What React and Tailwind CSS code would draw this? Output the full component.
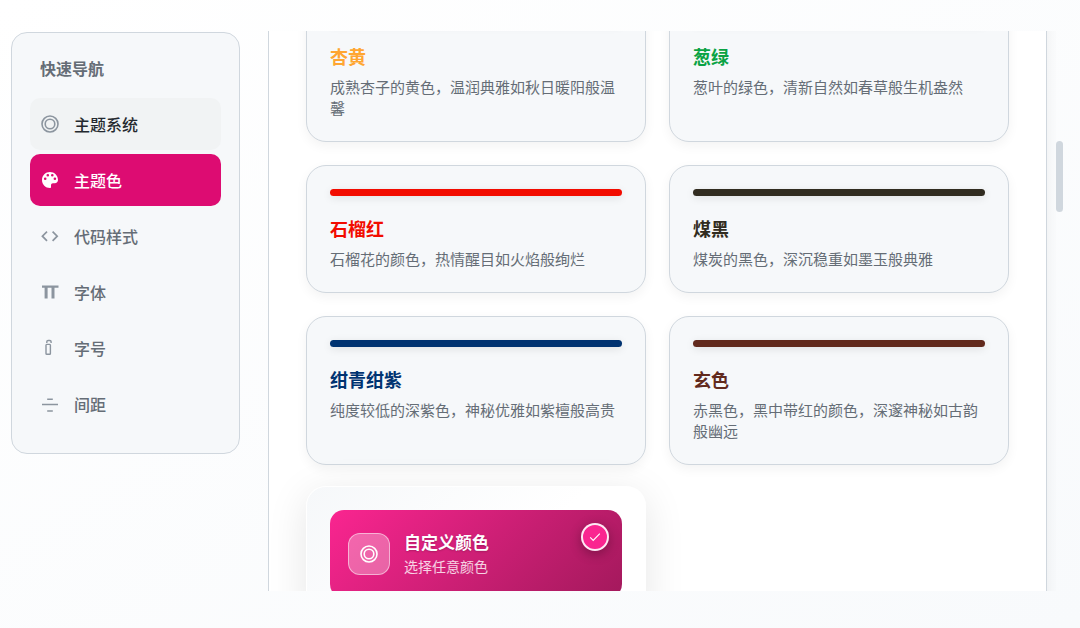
import { useState } from 'react'
import clsx from 'clsx'

const RingIcon = ({ className }) => (
  <svg viewBox="0 0 20 20" fill="none" stroke="currentColor" strokeWidth="1.6" className={className} aria-hidden="true">
    <circle cx="10" cy="10" r="8" />
    <circle cx="10" cy="10" r="4.8" />
  </svg>
)

const PaletteIcon = ({ className }) => (
  <svg viewBox="0 0 20 20" fill="currentColor" className={className} aria-hidden="true">
    <path
      fillRule="evenodd"
      d="M10 2C5.5 2 2 5.5 2 10s3.600 8 8 8c.6 0 1-.5 1-1.100v-1.700c0-1.100.8-1.900 1.900-1.900h1.900c1.800 0 3.200-1.500 3.200-3.300C18 5.500 14.400 2 10 2ZM5.200 10a1.300 1.300 0 1 1 0-2.600 1.300 1.300 0 0 1 0 2.600Zm2.600-3.500a1.300 1.300 0 1 1 0-2.600 1.300 1.300 0 0 1 0 2.600Zm4.500 0a1.300 1.300 0 1 1 0-2.600 1.300 1.300 0 0 1 0 2.600Zm2.600 3.500a1.300 1.300 0 1 1 0-2.600 1.300 1.300 0 0 1 0 2.600Z"
    />
  </svg>
)

const CodeIcon = ({ className }) => (
  <svg viewBox="0 0 20 20" fill="none" stroke="currentColor" strokeWidth="1.7" className={className} aria-hidden="true">
    <path d="M7 5.600 2.400 10.200 7 14.800M12.600 5.600l4.600 4.600-4.600 4.600" />
  </svg>
)

const FontIcon = ({ className }) => (
  <svg viewBox="0 0 20 20" fill="currentColor" className={className} aria-hidden="true">
    <path d="M2 3.400h16.500v2.400h-4v10.700h-3V5.800H7.600v10.700h-3V5.800H2z" />
  </svg>
)

const SizeIcon = ({ className }) => (
  <svg viewBox="0 0 20 20" fill="none" stroke="currentColor" strokeWidth="1.4" className={className} aria-hidden="true">
    <path d="M6.800 5V3.800c0-.8.5-1.300 1.300-1.300h1.700c.8 0 1.300.5 1.300 1.300V5" />
    <rect x="6" y="6.400" width="4.400" height="9.800" rx="0.800" />
  </svg>
)

const SpacingIcon = ({ className }) => (
  <svg viewBox="0 0 20 20" fill="none" stroke="currentColor" strokeWidth="1.5" className={className} aria-hidden="true">
    <path d="M2 10.500h16M7.200 5.200h5.600M7.200 17h5.600" />
  </svg>
)

const navItems = [
  { id: 'theme', label: '主题系统', icon: RingIcon },
  { id: 'color', label: '主题色', icon: PaletteIcon },
  { id: 'code', label: '代码样式', icon: CodeIcon },
  { id: 'font', label: '字体', icon: FontIcon },
  { id: 'size', label: '字号', icon: SizeIcon },
  { id: 'spacing', label: '间距', icon: SpacingIcon },
]

const colors = [
  { name: '杏黄', desc: '成熟杏子的黄色，温润典雅如秋日暖阳般温馨', bar: 'bg-[#ffa631]', text: 'text-[#ffa631]' },
  { name: '葱绿', desc: '葱叶的绿色，清新自然如春草般生机盎然', bar: 'bg-[#0aa344]', text: 'text-[#0aa344]' },
  { name: '石榴红', desc: '石榴花的颜色，热情醒目如火焰般绚烂', bar: 'bg-[#f20c00]', text: 'text-[#f20c00]' },
  { name: '煤黑', desc: '煤炭的黑色，深沉稳重如墨玉般典雅', bar: 'bg-[#312c20]', text: 'text-[#312c20]' },
  { name: '绀青绀紫', desc: '纯度较低的深紫色，神秘优雅如紫檀般高贵', bar: 'bg-[#003371]', text: 'text-[#003371]' },
  { name: '玄色', desc: '赤黑色，黑中带红的颜色，深邃神秘如古韵般幽远', bar: 'bg-[#622a1d]', text: 'text-[#622a1d]' },
]

function Sidebar({ active, onSelect }) {
  return (
    <nav className="mt-px w-[229px] shrink-0 self-start rounded-2xl border border-[#d0d7de] bg-[#f6f8fa] px-[18px] py-[23px]">
      <h2 className="mb-[18px] px-2.5 text-base leading-6 font-semibold text-[#656d76]">快速导航</h2>
      <div className="flex flex-col gap-1">
        {navItems.map(({ id, label, icon: Icon }) => (
          <button
            key={id}
            type="button"
            onClick={() => onSelect(id)}
            className={clsx(
              'flex h-13 items-center gap-3.5 rounded-[10px] px-2.5 text-base font-medium',
              active === id && 'bg-[#dd0c72] text-white',
              active !== id && id === 'theme' && 'bg-[#f1f3f4] text-[#24292f]',
              active !== id && id !== 'theme' && 'text-[#656d76]'
            )}
          >
            <Icon className={clsx('size-5', active === id ? 'text-white' : 'text-[#8c959f]')} />
            <span>{label}</span>
          </button>
        ))}
      </div>
    </nav>
  )
}

function ColorCard({ color }) {
  return (
    <button
      type="button"
      className="flex flex-col rounded-[20px] border border-[#d0d7de] bg-[#f6f8fa] p-[23px] text-left shadow-[0_4px_12px_rgba(0,0,0,0.05)]"
    >
      <span className={clsx('mb-5 h-[7px] w-full rounded-full shadow-[0_2px_8px_rgba(0,0,0,0.1)]', color.bar)} />
      <span className={clsx('mb-2 text-lg leading-6 font-semibold', color.text)}>{color.name}</span>
      <span className="text-[15px] leading-[21px] text-[#656d76]">{color.desc}</span>
    </button>
  )
}

function CustomColorCard() {
  return (
    <div className="-translate-y-0.5 rounded-[20px] border border-white bg-linear-135 from-[#f6f8fa] to-white to-60% p-[23px] shadow-[0_8px_40px_rgba(0,0,0,0.1)]">
      <button
        type="button"
        className="flex w-full items-start justify-between rounded-[14px] bg-linear-135 from-[#fa2590] to-[#a3195c] p-[13px] text-left text-white"
      >
        <span className="flex items-center gap-3.5 py-[7px] pl-[5px]">
          <span className="flex size-[42px] items-center justify-center rounded-xl border border-white/50 bg-white/30">
            <RingIcon className="size-5" />
          </span>
          <span className="flex flex-col">
            <span className="text-[17px] leading-6 font-semibold [text-shadow:0_1px_2px_rgba(0,0,0,0.2)]">自定义颜色</span>
            <span className="text-sm leading-6 text-white/80">选择任意颜色</span>
          </span>
        </span>
        <span className="flex size-7 items-center justify-center rounded-full border-2 border-white/90 bg-[#fa2590] shadow-[0_3px_12px_rgba(0,0,0,0.3)]">
          <svg viewBox="0 0 12 12" fill="none" stroke="currentColor" strokeWidth="1.1" className="size-3" aria-hidden="true">
            <path d="m1.200 6.400 3 3 6.600-6.800" />
          </svg>
        </span>
      </button>
    </div>
  )
}

export default function App() {
  const [active, setActive] = useState('color')

  return (
    <div className="flex h-screen gap-7 overflow-hidden bg-linear-to-br from-white to-[#f8fafc] pt-[31px] pr-[17px] pb-[37px] pl-[11px] font-['Noto_Sans_CJK_SC',sans-serif]">
      <Sidebar active={active} onSelect={setActive} />
      <main className="flex min-w-0 flex-1">
        <div className="min-w-0 flex-1 overflow-hidden pr-[9px]">
          <section className="min-h-full border-x border-[#d0d7de] bg-white px-[37px] shadow-[0_4px_16px_rgba(0,0,0,0.06)]">
            <div className="-mt-[38px] grid grid-cols-2 gap-[23px]">
              {colors.map((color) => (
                <ColorCard key={color.name} color={color} />
              ))}
              <CustomColorCard />
            </div>
          </section>
        </div>
        <div className="w-[7px] pt-[110px]">
          <div className="h-[71px] rounded-full bg-[#d0d7de]" />
        </div>
      </main>
    </div>
  )
}
